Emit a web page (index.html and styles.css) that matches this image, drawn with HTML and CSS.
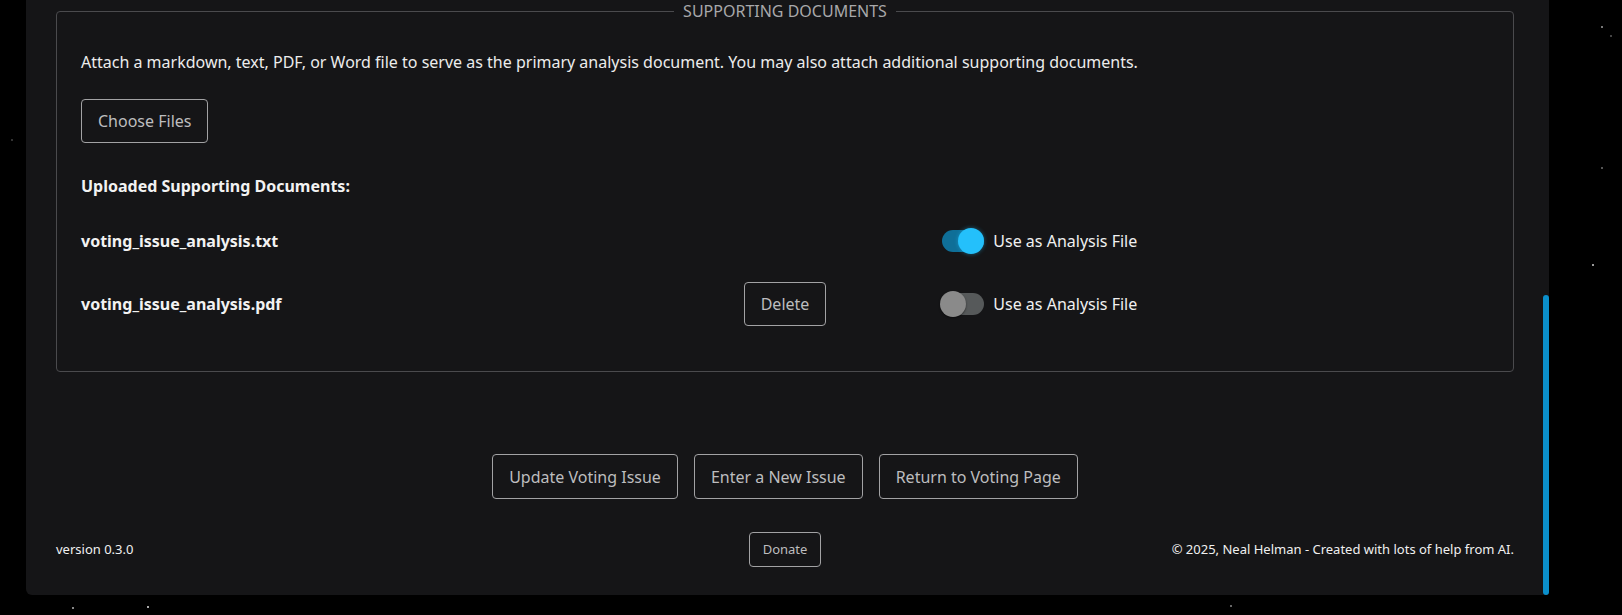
FILE: index.html
```html
<!DOCTYPE html>
<html lang="en">
<head>
<meta charset="utf-8">
<title>Supporting Documents</title>
<link rel="stylesheet" href="styles.css">
</head>
<body>
<div class="panel">
  <fieldset class="docs">
    <legend class="docs-legend">SUPPORTING DOCUMENTS</legend>
    <p class="hint">Attach a markdown, text, PDF, or Word file to serve as the primary analysis document. You may also attach additional supporting documents.</p>
    <div class="upload"><button class="btn" type="button">Choose Files</button></div>
    <h3 class="list-title">Uploaded Supporting Documents:</h3>
    <div class="doc-list">
      <div class="doc-name">voting_issue_analysis.txt</div>
      <div class="doc-action"></div>
      <div class="doc-toggle">
        <span class="switch on"><span class="track"></span><span class="knob"></span></span>
        <span class="switch-label">Use as Analysis File</span>
      </div>

      <div class="doc-name">voting_issue_analysis.pdf</div>
      <div class="doc-action"><button class="btn" type="button">Delete</button></div>
      <div class="doc-toggle">
        <span class="switch"><span class="track"></span><span class="knob"></span></span>
        <span class="switch-label">Use as Analysis File</span>
      </div>
    </div>
  </fieldset>

  <div class="actions">
    <button class="btn" type="button">Update Voting Issue</button>
    <button class="btn" type="button">Enter a New Issue</button>
    <button class="btn" type="button">Return to Voting Page</button>
  </div>

  <footer class="footer">
    <span class="version">version 0.3.0</span>
    <button class="btn btn-small" type="button">Donate</button>
    <span class="copyright">© 2025, Neal Helman - Created with lots of help from AI.</span>
  </footer>

  <div class="scrollbar"></div>
</div>
</body>
</html>
```

FILE: styles.css
```css
* { box-sizing: border-box; }

html, body {
  margin: 0;
  height: 100%;
}

body {
  background-color: #000;
  background-image:
    radial-gradient(circle at 1602px 27px, #777 0, #777 1px, transparent 1.5px),
    radial-gradient(circle at 1593px 265px, #999 0, #999 1px, transparent 1.5px),
    radial-gradient(circle at 1602px 168px, #555 0, #555 1px, transparent 1.5px),
    radial-gradient(circle at 1611px 36px, #444 0, #444 0.8px, transparent 1.3px),
    radial-gradient(circle at 73px 608px, #888 0, #888 1px, transparent 1.5px),
    radial-gradient(circle at 148px 607px, #aaa 0, #aaa 1px, transparent 1.5px),
    radial-gradient(circle at 1231px 606px, #666 0, #666 1px, transparent 1.5px),
    radial-gradient(circle at 12px 140px, #333 0, #333 0.8px, transparent 1.3px);
  font-family: "Noto Sans", "Open Sans", sans-serif;
  color: #e8e8e8;
}

.panel {
  position: relative;
  margin-left: 26px;
  width: 1523px;
  background: #151517;
  padding: 0 35px 28px 30px;
  border-radius: 0 0 6px 6px;
}

.docs {
  margin: 0;
  padding: 0 24px 45px;
  border: 1px solid #4a4a4d;
  border-radius: 4px;
  min-inline-size: 0;
}

.docs-legend {
  margin: 0 auto;
  padding: 0 9px;
  font-size: 16px;
  line-height: 22px;
  color: #a8a8aa;
}

.hint {
  margin: 28px 0 0;
  font-size: 16px;
  line-height: 24px;
  color: #ececec;
}

.upload {
  margin-top: 25px;
}

.btn {
  font-family: "Noto Sans", "Open Sans", sans-serif;
  font-size: 16px;
  line-height: 24px;
  padding: 9px 16px;
  color: #bdbdbf;
  background: transparent;
  border: 1px solid #a2a2a4;
  border-radius: 4px;
  cursor: pointer;
}

.btn-small {
  font-size: 13px;
  line-height: 19px;
  padding: 7px 13px;
}

.list-title {
  margin: 31px 0 0;
  font-size: 16px;
  line-height: 24px;
  font-weight: 700;
  color: #f2f2f2;
}

.doc-list {
  margin-top: 21px;
  display: grid;
  grid-template-columns: 1fr auto 1fr;
  grid-auto-rows: 44px;
  column-gap: 114px;
  row-gap: 19px;
  align-items: center;
}

.doc-name {
  font-size: 16px;
  line-height: 24px;
  font-weight: 700;
  color: #f2f2f2;
}

.doc-toggle {
  display: flex;
  align-items: center;
  gap: 9px;
}

.switch {
  position: relative;
  width: 44px;
  height: 26px;
  flex: none;
}

.switch .track {
  position: absolute;
  left: 2px;
  right: 0;
  top: 2px;
  height: 22px;
  border-radius: 11px;
  background: #56595a;
}

.switch .knob {
  position: absolute;
  top: 0;
  left: 0;
  width: 26px;
  height: 26px;
  border-radius: 50%;
  background: #8a8a8a;
  box-shadow: 0 1px 2px rgba(0, 0, 0, 0.5);
}

.switch.on .track {
  background: #0f6f98;
}

.switch.on .knob {
  left: 18px;
  background: #24c0fb;
  box-shadow: 0 0 4px rgba(36, 192, 251, 0.45);
}

.switch-label {
  font-size: 16px;
  line-height: 24px;
  color: #f0f0f0;
}

.actions {
  margin-top: 82px;
  display: flex;
  justify-content: center;
  gap: 16px;
}

.actions .btn {
  padding: 10px 16px 9px;
}

.footer {
  margin-top: 33px;
  display: grid;
  grid-template-columns: 1fr auto 1fr;
  align-items: center;
  font-size: 13px;
  line-height: 19px;
  color: #f0f0f0;
}

.copyright {
  justify-self: end;
}

.scrollbar {
  position: absolute;
  right: 0;
  top: 295px;
  bottom: 0;
  width: 6px;
  border-radius: 3px;
  background: #0b8fcb;
}
```
